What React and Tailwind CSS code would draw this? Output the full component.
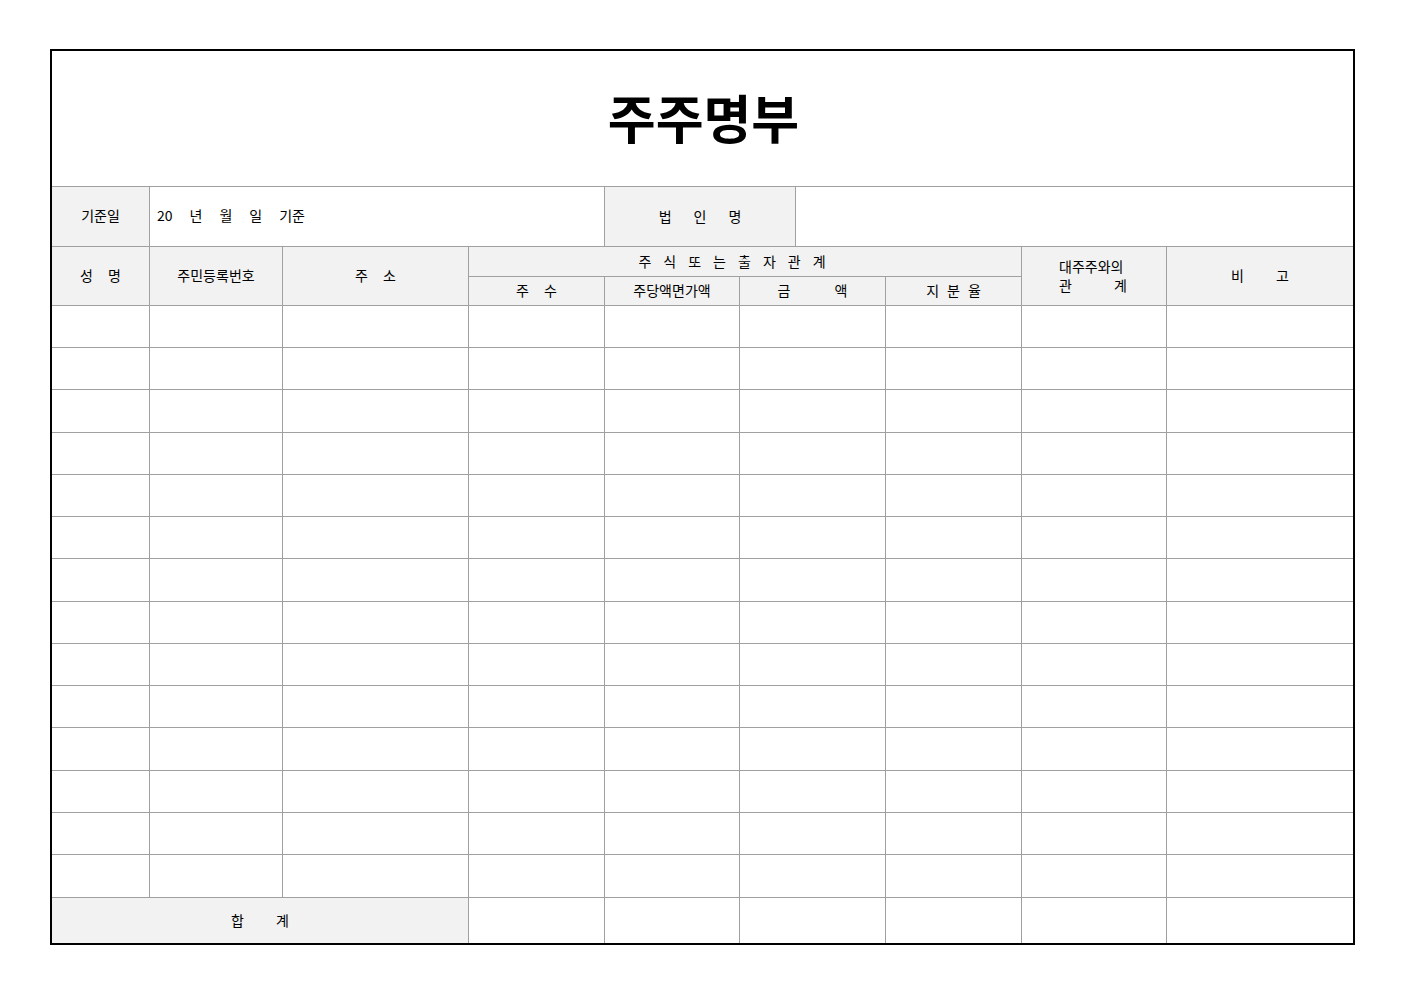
import React from 'react';

const LINE = 'border-[#a0a0a0]';
const GRAY = 'bg-[#f2f2f2]';

// data row heights between the gray rules
const ROWS = [42, 42, 43, 42, 42, 42, 43, 42, 42, 42, 43, 42, 42, 43];

function Cell({ className = '', children, last = false, bottom = true }) {
  return (
    <div
      className={`${last ? '' : 'border-r'} ${bottom ? 'border-b' : ''} ${LINE} flex items-center justify-center leading-none pb-[2px] ${className}`}
    >
      {children}
    </div>
  );
}

function Spread({ parts, gap }) {
  return (
    <div className="flex items-center leading-none" style={{ gap }}>
      {parts.map((p, i) => (
        <span key={i}>{p}</span>
      ))}
    </div>
  );
}

export default function App() {
  return (
    <div className="min-h-screen bg-white font-['Noto_Sans_CJK_KR',sans-serif] text-[14px] text-black pt-[49px] pl-[50px]">
      <div className="w-[1305px] border-2 border-black flex flex-col">
        {/* title */}
        <div className={`h-[136px] border-b ${LINE} flex items-center justify-center pb-[4px]`}>
          <h1 className="text-[52px] font-bold leading-none pl-[2px]">주주명부</h1>
        </div>

        {/* 기준일 / 법인명 */}
        <div className={`h-[60px] border-b ${LINE} flex`}>
          <div className={`w-[98px] border-r ${LINE} ${GRAY} flex items-center justify-center pb-[2px]`}>기준일</div>
          <div className={`w-[455px] border-r ${LINE} flex items-center pl-[7px] pb-[2px]`}>
            <div className="flex items-center gap-[17px]">
              <span>20</span>
              <span>년</span>
              <span>월</span>
              <span>일</span>
              <span>기준</span>
            </div>
          </div>
          <div className={`w-[191px] border-r ${LINE} ${GRAY} flex items-center justify-center pb-[2px]`}>
            <Spread parts={['법', '인', '명']} gap="22px" />
          </div>
          <div className="flex-1" />
        </div>

        {/* table */}
        <div
          className="grid grid-cols-[98px_133px_186px_136px_135px_146px_136px_145px_1fr]"
          style={{ gridTemplateRows: ['30px', '29px', ...ROWS.map((h) => `${h}px`), '45px'].join(' ') }}
        >
          <Cell className={`row-span-2 ${GRAY}`}>
            <Spread parts={['성', '명']} gap="15px" />
          </Cell>
          <Cell className={`row-span-2 ${GRAY}`}>주민등록번호</Cell>
          <Cell className={`row-span-2 ${GRAY}`}>
            <Spread parts={['주', '소']} gap="15px" />
          </Cell>
          <Cell className={`col-span-4 ${GRAY} pr-[26px]`}>
            <Spread parts={['주', '식', '또', '는', '출', '자', '관', '계']} gap="12px" />
          </Cell>
          <Cell className={`row-span-2 ${GRAY}`}>
            <div className="w-[70px] flex flex-col gap-[5px]">
              <span className="leading-none">대주주와의</span>
              <div className="flex justify-between leading-none pr-[2px]">
                <span>관</span>
                <span>계</span>
              </div>
            </div>
          </Cell>
          <Cell className={`row-span-2 ${GRAY}`} last>
            <Spread parts={['비', '고']} gap="32px" />
          </Cell>

          <Cell className={GRAY}>
            <Spread parts={['주', '수']} gap="15px" />
          </Cell>
          <Cell className={GRAY}>주당액면가액</Cell>
          <Cell className={GRAY}>
            <Spread parts={['금', '액']} gap="44px" />
          </Cell>
          <Cell className={GRAY}>
            <Spread parts={['지', '분', '율']} gap="8px" />
          </Cell>

          {ROWS.map((h, r) =>
            Array.from({ length: 9 }).map((_, c) => <Cell key={`${r}-${c}`} last={c === 8} />)
          )}

          <Cell className={`col-span-3 ${GRAY}`} bottom={false}>
            <Spread parts={['합', '계']} gap="32px" />
          </Cell>
          {Array.from({ length: 6 }).map((_, c) => (
            <Cell key={`t-${c}`} last={c === 5} bottom={false} />
          ))}
        </div>
      </div>
    </div>
  );
}
